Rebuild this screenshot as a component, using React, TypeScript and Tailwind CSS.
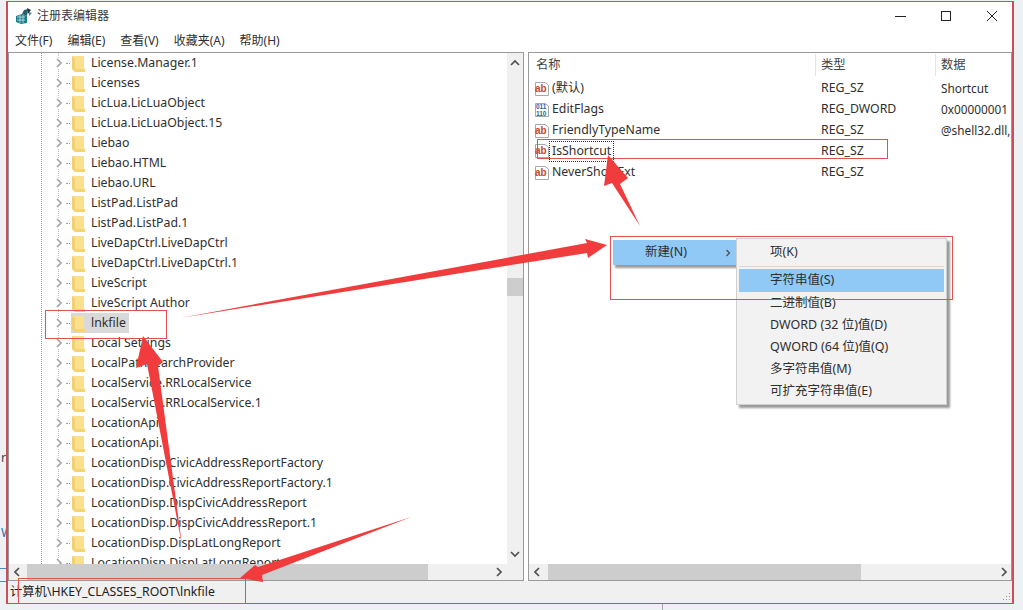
const treeItems = [
  "License.Manager.1",
  "Licenses",
  "LicLua.LicLuaObject",
  "LicLua.LicLuaObject.15",
  "Liebao",
  "Liebao.HTML",
  "Liebao.URL",
  "ListPad.ListPad",
  "ListPad.ListPad.1",
  "LiveDapCtrl.LiveDapCtrl",
  "LiveDapCtrl.LiveDapCtrl.1",
  "LiveScript",
  "LiveScript Author",
  "lnkfile",
  "Local Settings",
  "LocalPathSearchProvider",
  "LocalService.RRLocalService",
  "LocalService.RRLocalService.1",
  "LocationApi",
  "LocationApi.1",
  "LocationDisp.CivicAddressReportFactory",
  "LocationDisp.CivicAddressReportFactory.1",
  "LocationDisp.DispCivicAddressReport",
  "LocationDisp.DispCivicAddressReport.1",
  "LocationDisp.DispLatLongReport",
  "LocationDisp.DispLatLongReport.1",
];

const values = [
  { name: "(默认)", type: "REG_SZ", data: "Shortcut", kind: "ab" },
  { name: "EditFlags", type: "REG_DWORD", data: "0x00000001", kind: "bin" },
  { name: "FriendlyTypeName", type: "REG_SZ", data: "@shell32.dll,", kind: "ab" },
  { name: "IsShortcut", type: "REG_SZ", data: "", kind: "ab", focused: true },
  { name: "NeverShowExt", type: "REG_SZ", data: "", kind: "ab" },
];

const menuItems = [
  "二进制值(B)",
  "DWORD (32 位)值(D)",
  "QWORD (64 位)值(Q)",
  "多字符串值(M)",
  "可扩充字符串值(E)",
];

const Chevron = ({ dir, className, color = "#505050" }: { dir: "l" | "r" | "u" | "d"; className?: string; color?: string }) => {
  const d = {
    l: "M6 1 L2 5 L6 9",
    r: "M3 1 L7 5 L3 9",
    u: "M1 7 L5 3 L9 7",
    d: "M1 3 L5 7 L9 3",
  }[dir];
  return (
    <svg width="10" height="10" viewBox="0 0 10 10" className={className}>
      <path d={d} fill="none" stroke={color} strokeWidth="1.7" />
    </svg>
  );
};

const Folder = () => (
  <svg width="13" height="17" viewBox="0 0 13 17" className="shrink-0">
    <path d="M0 1 H12 V14 H0 Z" fill="#fbe18e" />
    <path d="M3 14 H13 V17 H3 Z" fill="#f7d36c" />
    <path d="M0 1 V14 L3 17 V4 Z" fill="#f3cf74" />
  </svg>
);

const ValueIcon = ({ kind }: { kind: string }) => (
  <svg width="16" height="16" viewBox="0 0 16 16" className="shrink-0">
    <path d="M1.5 1.5 H11 L14.5 4 V14.5 H1.5 Z" fill="#fff" stroke="#a8a8a8" />
    {kind === "ab" ? (
      <text x="1" y="10.5" fontSize="10" fontWeight="700" fill="#c8492b" fontFamily="Liberation Sans, sans-serif">
        ab
      </text>
    ) : (
      <>
        <text x="2" y="7" fontSize="6.5" fontWeight="700" fill="#1f5fa8" fontFamily="Liberation Sans, sans-serif">
          011
        </text>
        <text x="2" y="13.5" fontSize="6.5" fontWeight="700" fill="#1f5fa8" fontFamily="Liberation Sans, sans-serif">
          110
        </text>
      </>
    )}
  </svg>
);

const AppIcon = () => (
  <svg width="18" height="18" viewBox="0 0 18 18" className="shrink-0">
    <path d="M1 9 L7 7 L12 9 V16 L6 17 L1 15 Z" fill="#1d7d8c" />
    <path d="M7 7 L9 3 L13 2 L12 9 Z" fill="#2b5f6e" />
    <path d="M2 10 H10 M2 13 H10 M5 8 V16 M8 8 V16" stroke="#bfe6ea" strokeWidth="0.8" />
    <path d="M12 1 L16 3 L13 7 Z" fill="#20343c" />
    <path d="M14 5 L17 6 L14 9 Z" fill="#3d8f9c" />
  </svg>
);

const TreePane = () => (
  <div className="relative min-w-0 flex-1 overflow-hidden">
    <div className="absolute left-[32px] top-0 h-full border-l border-dotted border-[#9a9a9a]" />
    <div className="absolute left-[49px] top-0 h-full border-l border-dotted border-[#c0c0c0]" />
    <div>
      {treeItems.map((item) => (
        <div key={item} className="relative flex h-[20px] items-center pl-[45px]">
          <Chevron dir="r" color="#a6a6a6" className="shrink-0 bg-white" />
          <div className="ml-[2px] mr-[1px] w-[4px] shrink-0 border-t border-dotted border-[#9a9a9a]" />
          {item === "lnkfile" ? (
            <div className="flex h-[20px] items-center bg-[#d9d9d9] pl-[1px] pr-[3px]">
              <Folder />
              <span className="ml-[6px]">{item}</span>
            </div>
          ) : (
            <>
              <div className="pl-[1px]">
                <Folder />
              </div>
              <span className="ml-[6px] whitespace-nowrap">{item}</span>
            </>
          )}
        </div>
      ))}
    </div>
  </div>
);

const Annotations = () => (
  <>
    <div className="absolute left-[45px] top-[310px] h-[29px] w-[122px] border border-[#e2504f]" />
    <div className="absolute left-[537px] top-[139px] h-[20px] w-[351px] border border-[#e2504f]" />
    <div className="absolute left-[18px] top-[578px] h-[26px] w-[228px] border border-[#e2504f]" />
    <div className="absolute left-[610px] top-[236px] h-[64px] w-[343px] border border-[#e2504f]" />
    <svg width="1023" height="610" viewBox="0 0 1023 610" className="pointer-events-none absolute left-0 top-0">
      <g fill="#f03c3c">
        <polygon points="640,226 620,184 628,178 608,155 604,186 612,183" />
        <polygon points="180,318 587,243 585,239 607,245 588,258 587,253" />
        <polygon points="182,545 158,366 163,362 143,336 136,368 147,364" />
        <polygon points="411,517 262,575 263,582 240,578 255,565 258,567" />
      </g>
    </svg>
  </>
);

const ContextMenu = () => (
  <div className="text-[12.5px]">
    <div className="absolute left-[613px] top-[240px] flex h-[25px] w-[124px] items-center justify-between bg-[#90c8f6] pl-[32px] pr-[4px] shadow-[2px_3px_2px_#9a9a9a]">
      <span>新建(N)</span>
      <Chevron dir="r" className="scale-75" />
    </div>
    <div className="absolute left-[736px] top-[238px] h-[167px] w-[211px] border border-[#d0d0d0] bg-[#f2f2f2] shadow-[3px_3px_2px_#9a9a9a]">
      <div className="flex h-[25px] items-center pl-[33px] pt-[1px]">项(K)</div>
      <div className="mx-[2px] my-[2px] border-t border-[#d8d8d8]" />
      <div className="mx-[2px] flex h-[23px] items-center bg-[#90c8f6] pl-[31px]">字符串值(S)</div>
      {menuItems.map((item) => (
        <div key={item} className="flex h-[22px] items-center pl-[33px]">
          {item}
        </div>
      ))}
    </div>
  </div>
);

// bits of the page behind the window, only visible at the edges
const Backdrop = () => (
  <>
    <span className="absolute left-[1px] top-[452px] text-[#444]">r</span>
    <span className="absolute left-[1px] top-[527px] text-[#2a6fb0]">W</span>
    <div className="absolute left-0 top-[568px] h-[14px] w-[7px] border-y border-[#4a8cc8]" />
    <div className="absolute left-[662px] top-[604px] h-[6px] w-px bg-[#a8a8a8]" />
  </>
);

const App = () => {
  return (
    <div
      className="relative h-[610px] w-[1023px] overflow-hidden bg-[#eef1f4] text-[12.3px] leading-none text-[#2f2f2f]"
      style={{ fontFamily: '"Noto Sans", "Noto Sans CJK SC", sans-serif' }}
    >
      <Backdrop />
      <div className="relative ml-[6px] mt-px flex h-[603px] w-[1008px] flex-col border border-x-2 border-[#c9505a] bg-white">
        <div className="flex h-[28px] shrink-0 items-center pl-[7px]">
          <AppIcon />
          <span className="ml-[4px] text-[12px] text-[#3a3a3a]">注册表编辑器</span>
          <div className="ml-auto flex items-center">
            <div className="mr-[35px] h-px w-[11px] bg-[#222]" />
            <div className="mr-[35px] h-[10px] w-[10px] border border-[#222]" />
            <svg width="12" height="12" viewBox="0 0 12 12" className="mr-[14px]">
              <path d="M1 1 L11 11 M11 1 L1 11" stroke="#222" strokeWidth="1" />
            </svg>
          </div>
        </div>
        <div className="flex h-[22px] shrink-0 items-center gap-[15px] pl-[7px] text-[12px]">
          <span>文件(F)</span>
          <span>编辑(E)</span>
          <span>查看(V)</span>
          <span>收藏夹(A)</span>
          <span>帮助(H)</span>
        </div>
        <div className="flex min-h-0 flex-1 gap-[4px]">
          <div className="flex w-[516px] shrink-0 flex-col border border-[#9a9a9a]">
            <div className="flex min-h-0 flex-1">
              <TreePane />
              <div className="flex w-[16px] shrink-0 flex-col items-center bg-[#f0f0f0] py-[5px]">
                <Chevron dir="u" />
                <div className="mt-[210px] h-[18px] w-full bg-[#cdcdcd]" />
                <Chevron dir="d" className="mt-auto" />
              </div>
            </div>
            <div className="flex h-[16px] shrink-0 items-center bg-[#f0f0f0]">
              <Chevron dir="l" className="mx-[4px]" />
              <div className="h-full w-[401px] bg-[#cdcdcd]" />
              <Chevron dir="r" className="ml-auto mr-[19px]" />
            </div>
          </div>
          <div className="flex min-w-0 flex-1 flex-col border border-[#9a9a9a]">
            <div className="flex h-[25px] shrink-0 items-center pb-px text-[#444]">
              <div className="w-[286px] pl-[7px]">名称</div>
              <div className="w-[120px] border-l border-[#e5e5e5] py-[5px] pl-[5px]">类型</div>
              <div className="flex-1 border-l border-[#e5e5e5] py-[5px] pl-[5px]">数据</div>
            </div>
            <div className="min-h-0 flex-1 overflow-hidden">
              {values.map((row) => (
                <div key={row.name} className="flex h-[21px] items-center whitespace-nowrap">
                  <div className="flex w-[287px] shrink-0 items-center pl-[5px]">
                    <ValueIcon kind={row.kind} />
                    <span className={row.focused ? "ml-[-1px] border border-dotted border-[#333] px-[2px] py-[3px]" : "ml-[1px] px-px"}>
                      {row.name}
                    </span>
                  </div>
                  <div className="w-[120px] shrink-0 pl-[5px]">{row.type}</div>
                  <div className="pl-[5px] text-[11.8px]">{row.data}</div>
                </div>
              ))}
            </div>
            <div className="flex h-[16px] shrink-0 items-center bg-[#f0f0f0]">
              <Chevron dir="l" className="mx-[4px]" />
              <div className="ml-[1px] h-full w-[313px] bg-[#cdcdcd]" />
              <Chevron dir="r" className="ml-auto mr-[2px]" />
            </div>
          </div>
        </div>
        <div className="flex h-[22px] shrink-0 items-center bg-[#f0f0f0] pl-[2px] text-[#222]">
          计算机\HKEY_CLASSES_ROOT\lnkfile
          <svg width="10" height="10" viewBox="0 0 10 10" className="ml-auto mr-[1px] mt-[10px]">
            <path d="M8 1 H9 V2 H8 Z M5 4 H6 V5 H5 Z M8 4 H9 V5 H8 Z M2 7 H3 V8 H2 Z M5 7 H6 V8 H5 Z M8 7 H9 V8 H8 Z" fill="#999" />
          </svg>
        </div>
      </div>
      <ContextMenu />
      <Annotations />
    </div>
  );
};

export default App;
